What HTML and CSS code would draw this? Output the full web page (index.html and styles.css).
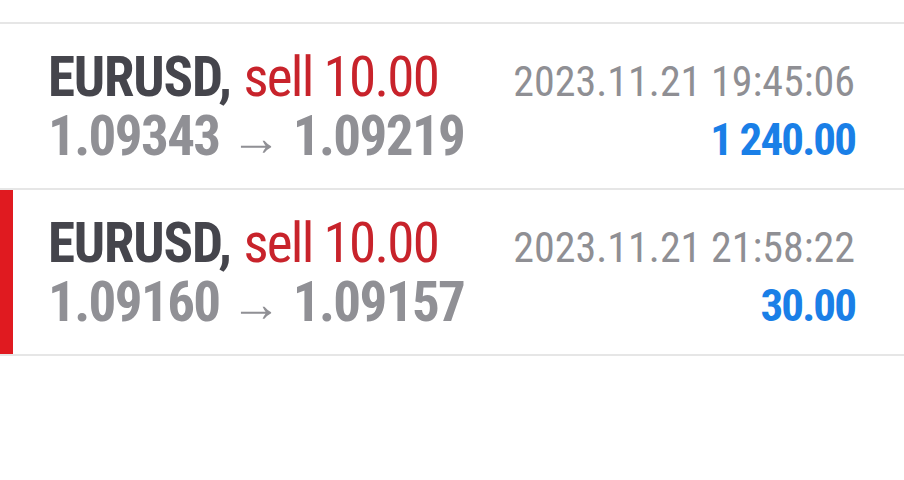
FILE: index.html
```html
<!DOCTYPE html>
<html>
<head>
<meta charset="utf-8">
<link rel="stylesheet" href="styles.css">
</head>
<body>
<div class="list">
  <div class="trade">
    <div class="line">
      <div class="title"><span class="symbol">EURUSD,</span> <span class="side">sell 10.00</span></div>
      <div class="time">2023.11.21 19:45:06</div>
    </div>
    <div class="line">
      <div class="prices">1.09343 <span class="arrow">→</span> 1.09219</div>
      <div class="profit">1 240.00</div>
    </div>
  </div>
  <div class="trade selected">
    <div class="line">
      <div class="title"><span class="symbol">EURUSD,</span> <span class="side">sell 10.00</span></div>
      <div class="time">2023.11.21 21:58:22</div>
    </div>
    <div class="line">
      <div class="prices">1.09160 <span class="arrow">→</span> 1.09157</div>
      <div class="profit">30.00</div>
    </div>
  </div>
</div>
</body>
</html>
```
FILE: styles.css
```css
html, body {
  margin: 0;
  padding: 0;
  background: #ffffff;
}
body {
  font-family: "Roboto", "Liberation Sans", sans-serif;
  font-stretch: 75%;
}
.list {
  padding-top: 22px;
}
.trade {
  border-top: 2px solid #e6e6e6;
  padding: 24px 49px 22px 48px;
}
.trade:last-child {
  border-bottom: 2px solid #e6e6e6;
}
.trade.selected {
  box-shadow: inset 13px 0 0 #e01a20;
}
.line {
  display: flex;
  justify-content: space-between;
  align-items: baseline;
  height: 59px;
  line-height: 59px;
}
.title {
  font-size: 55px;
}
.symbol {
  font-weight: 700;
  color: #45454c;
  letter-spacing: -1.2px;
}
.side {
  color: #c8232b;
  letter-spacing: -1.7px;
}
.time {
  font-size: 42px;
  color: #8f8f94;
}
.prices {
  font-size: 55px;
  font-weight: 700;
  color: #909095;
  letter-spacing: -1.6px;
}
.arrow {
  font-weight: 400;
  font-size: 51px;
  letter-spacing: 0;
}
.profit {
  font-size: 45px;
  font-weight: 700;
  color: #1a7fe7;
  letter-spacing: -1.9px;
}
```
